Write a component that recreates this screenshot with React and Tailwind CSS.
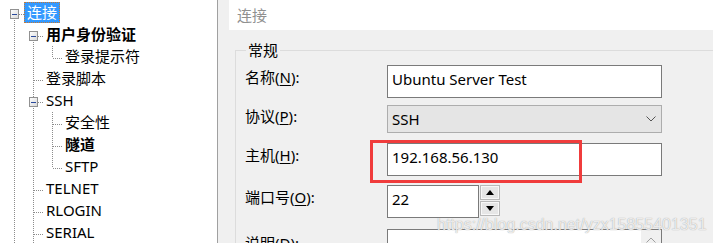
import React from 'react';

const ui = "font-['Noto_Sans','Noto_Sans_CJK_SC',sans-serif]";

const treeRows = [
  { label: '连接', guides: [], conn: 'first', box: true, selected: true },
  { label: '用户身份验证', guides: [true], conn: 'first', box: true, bold: true },
  { label: '登录提示符', guides: [true, true], conn: 'last' },
  { label: '登录脚本', guides: [true], conn: 'mid' },
  { label: 'SSH', guides: [true], conn: 'mid', box: true },
  { label: '安全性', guides: [true, true], conn: 'mid' },
  { label: '隧道', guides: [true, true], conn: 'mid', bold: true },
  { label: 'SFTP', guides: [true, true], conn: 'last' },
  { label: 'TELNET', guides: [true], conn: 'mid' },
  { label: 'RLOGIN', guides: [true], conn: 'mid' },
  { label: 'SERIAL', guides: [true], conn: 'mid' },
];

const dot = { stroke: '#8c8c8c', strokeWidth: 1, strokeDasharray: '1 1', shapeRendering: 'crispEdges' };

function GuideCell() {
  return (
    <svg width="19" height="22" className="shrink-0">
      <line x1="9.5" y1="0" x2="9.5" y2="22" {...dot} />
    </svg>
  );
}

function ConnCell({ conn, box }) {
  const top = conn === 'first' ? 12 : 0;
  const bottom = conn === 'last' ? 12 : 22;
  return (
    <svg width="19" height="22" className="shrink-0">
      <line x1="9.5" y1={top} x2="9.5" y2={bottom} {...dot} />
      <line x1="10" y1="12.5" x2="19" y2="12.5" {...dot} />
      {box && (
        <g shapeRendering="crispEdges">
          <defs>
            <linearGradient id="tbox" x1="0" y1="0" x2="1" y2="1">
              <stop offset="0" stopColor="#ffffff" />
              <stop offset="1" stopColor="#d8d8d8" />
            </linearGradient>
          </defs>
          <rect x="5.5" y="7.5" width="8" height="9" fill="url(#tbox)" stroke="#919191" />
          <line x1="7" y1="12.5" x2="12" y2="12.5" stroke="#2a4a9c" strokeWidth="1" />
        </g>
      )}
    </svg>
  );
}

function TreeRow({ row }) {
  return (
    <div className="flex h-[22px] items-start">
      {row.guides.map((g, i) => (g ? <GuideCell key={i} /> : <div key={i} className="w-[19px] shrink-0" />))}
      <ConnCell conn={row.conn} box={row.box} />
      <span
        className={
          'h-[21px] whitespace-nowrap border border-dotted px-[2px] text-[15px] leading-[19px] ' +
          (row.selected ? 'border-[#c87830] bg-[#3399ff] text-white ' : 'border-transparent text-black ') +
          (row.bold ? 'font-bold' : '')
        }
      >
        {row.label}
      </span>
    </div>
  );
}

function Label({ text, hot, rest, pt }) {
  return (
    <div className={'w-[142px] shrink-0 text-[15px] leading-[20px] text-black ' + pt}>
      {text}(<span className="underline underline-offset-2">{hot}</span>){rest}
    </div>
  );
}

function Field({ children, className }) {
  return (
    <div className={'h-[33px] border border-[#7a7a7a] bg-white pl-[4px] pt-[3px] text-[15px] leading-[20px] text-black ' + className}>
      {children}
    </div>
  );
}

export default function App() {
  return (
    <div className={'relative flex h-[243px] w-[713px] overflow-hidden bg-[#f0f0f0] ' + ui}>
      {/* tree */}
      <div className="w-[218px] shrink-0 border-r border-[#a0a0a0] bg-white pl-[5px] pt-[2px]">
        {treeRows.map((r, i) => (
          <TreeRow key={i} row={r} />
        ))}
      </div>

      {/* settings */}
      <div className="ml-[11px] flex min-w-0 flex-1 flex-col overflow-hidden">
        <div className="h-[30px] shrink-0 bg-white pl-[8px] text-[15px] leading-[30px] text-[#909090]">连接</div>

        <fieldset className="ml-[6px] mt-[10px] h-[260px] w-[520px] min-w-0 shrink-0 border border-[#dcdcdc] pl-[9px]">
          <legend className="ml-[1px] px-[2px] text-[15px] leading-[20px] text-black">常规</legend>

          <div className="mt-[5px] flex">
            <Label text="名称" hot="N" rest=":" pt="pt-[2px]" />
            <Field className="w-[275px]">Ubuntu Server Test</Field>
          </div>

          <div className="mt-[7px] flex">
            <Label text="协议" hot="P" rest=":" pt="pt-[1px]" />
            <div className="flex h-[28px] w-[275px] items-center justify-between border border-[#adadad] bg-[#e5e5e5] pl-[4px] pr-[5px] text-[15px] leading-[20px] text-black">
              <span>SSH</span>
              <svg width="10" height="6" viewBox="0 0 10 6">
                <polyline points="0.5,0.5 5,5 9.5,0.5" fill="none" stroke="#555" strokeWidth="1" />
              </svg>
            </div>
          </div>

          <div className="mt-[10px] flex">
            <Label text="主机" hot="H" rest=":" pt="pt-[2px]" />
            <Field className="w-[275px]">192.168.56.130</Field>
          </div>

          <div className="mt-[9px] flex">
            <Label text="端口号" hot="O" rest=":" pt="pt-[2px]" />
            <Field className="h-[32px] w-[92px]">22</Field>
            <div className="ml-[1px] flex h-[32px] w-[20px] flex-col gap-[1px]">
              <div className="flex h-[15px] items-center justify-center border border-[#b8b8b8] bg-[#e6e6e6] shadow-[inset_0_0_0_1px_#f8f8f8]">
                <svg width="8" height="5" viewBox="0 0 8 5">
                  <polygon points="4,0 8,5 0,5" fill="#000" />
                </svg>
              </div>
              <div className="flex h-[15px] items-center justify-center border border-[#b8b8b8] bg-[#e6e6e6] shadow-[inset_0_0_0_1px_#f8f8f8]">
                <svg width="8" height="5" viewBox="0 0 8 5">
                  <polygon points="0,0 8,0 4,5" fill="#000" />
                </svg>
              </div>
            </div>
          </div>

          <div className="mt-[11px] flex">
            <Label text="说明" hot="D" rest=":" pt="pt-[4px]" />
            <div className="flex h-[40px] w-[275px] justify-end border border-[#7a7a7a] bg-white">
              <div className="flex w-[20px] justify-center bg-[#f0f0f0] pt-[7px]">
                <svg width="10" height="6" viewBox="0 0 10 6">
                  <polyline points="0.5,5.5 5,1 9.5,5.5" fill="none" stroke="#a0a0a0" strokeWidth="1" />
                </svg>
              </div>
            </div>
          </div>
        </fieldset>
      </div>

      {/* annotation + watermark */}
      <div className="absolute left-[370px] top-[140px] h-[43px] w-[212px] border-[3px] border-[#f03c3c]" />
      <div className="pointer-events-none absolute left-[437px] top-[215px] whitespace-nowrap font-['Liberation_Sans',sans-serif] text-[16px] leading-[20px] text-white/80 [text-shadow:0_0_1px_#8c8c8c]">
        https://blog.csdn.net/yzx15855401351
      </div>
    </div>
  );
}
